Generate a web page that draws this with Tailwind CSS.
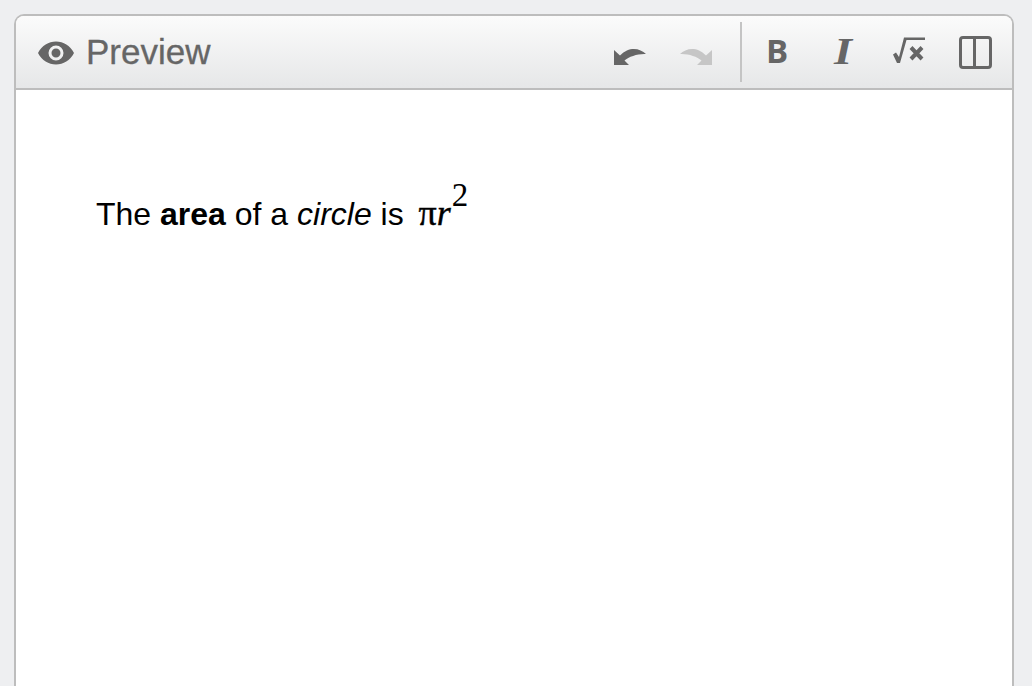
<!doctype html>
<html>
  <head>
    <meta charset="UTF-8" />
    <title>Preview</title>
    <script src="https://cdn.jsdelivr.net/npm/@tailwindcss/browser@4"></script>
  </head>

  <body class="h-[686px] overflow-hidden bg-[#eeeff1] font-['Liberation_Sans',sans-serif]">
    <div class="pt-[14px] pl-[14px]">
      <!-- Editor panel -->
      <div class="w-[1000px] h-[672px] bg-white border-2 border-b-0 border-[#bdbdbd] rounded-t-[10px] overflow-hidden">
        <!-- Toolbar -->
        <div class="h-[74px] flex items-center bg-gradient-to-b from-[#fbfbfb] to-[#e6e7e8] border-b-2 border-[#bdbdbd] text-[#666666]">
          <div class="flex items-center ml-[22px]">
            <svg class="w-[36px] h-[24px] mt-[2px]" viewBox="0 0 36 24" fill="currentColor">
              <path fill-rule="evenodd" d="M0 12C4 4.500 10.500 .5 18 .5S32 4.500 36 12c-4 7.500-10.500 11.500-18 11.500S4 19.500 0 12zm18-7.500a7.500 7.500 0 100 15 7.500 7.500 0 000-15zm0 3a4.500 4.500 0 110 9 4.500 4.500 0 010-9z" />
            </svg>
            <span class="ml-[12px] -mt-[2px] text-[35px] leading-none [-webkit-text-stroke:0.3px_#666666]">Preview</span>
          </div>

          <div class="ml-auto flex items-center h-full">
            <svg class="w-[32px] h-[20px] mt-[9px]" viewBox="0 0 32 20" fill="currentColor">
              <path d="M0 3V18H15L10.500 13.500C15 9.500 24 6.500 32 7 26 1 15-1 6 8.500Z" />
            </svg>
            <svg class="w-[32px] h-[20px] mt-[9px] ml-[34px] text-[#c6c6c6]" viewBox="0 0 32 20" fill="currentColor">
              <path d="M32 3V18H17L21.500 13.500C17 9.500 8 6.500 0 7 6 1 17-1 26 8.500Z" />
            </svg>
            <div class="w-[2px] h-[60px] bg-[#c4c4c4] ml-[28px]"></div>

            <span class="ml-[24px] w-[20px] text-[33px] leading-none font-bold font-['Open_Sans',sans-serif] -mt-[3px]">B</span>
            <span class="ml-[47px] w-[20px] text-center text-[37px] leading-none font-bold italic font-['Liberation_Serif',serif] -mt-[2px] scale-x-125">I</span>
            <svg class="ml-[39px] w-[34px] h-[28px] -mt-[4px]" viewBox="0 0 34 28" fill="currentColor" stroke="currentColor">
              <path stroke="none" d="M1 18.500L4 16.500L7 21L12 1.500H33V4H14.500L8 27H5Z" />
              <path fill="none" stroke-width="4" d="M19 11.500L30 23M30 11.500L19 23" />
            </svg>
            <div class="ml-[33px] mr-[20px] w-[33px] h-[33px] flex border-[3px] border-current rounded-[4px]">
              <div class="w-1/2 border-r-[3px] border-current"></div>
            </div>
          </div>
        </div>

        <!-- Rendered content -->
        <div class="pt-[98px] pl-[80px] text-black text-[32px] leading-[50px] whitespace-nowrap">
          The <b>area</b> of a <i>circle</i> is
          <span class="ml-[6px] font-['Liberation_Serif',serif] text-[36px] [-webkit-text-stroke:0.4px_#000000]">π<i>r</i><sup class="ml-[1px] text-[33px] top-[-19px] [-webkit-text-stroke:0]">2</sup></span>
        </div>
      </div>
    </div>
  </body>
</html>
